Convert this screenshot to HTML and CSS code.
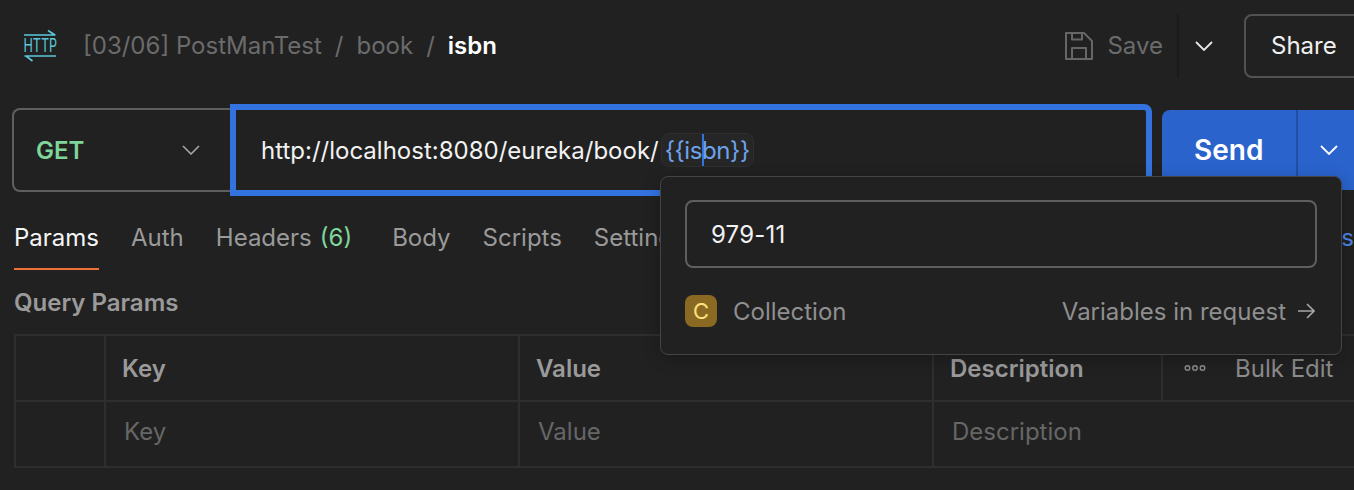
FILE: index.html
```html
<!DOCTYPE html>
<html lang="en">
<head>
<meta charset="utf-8">
<title>isbn</title>
<link rel="stylesheet" href="styles.css">
</head>
<body>
<div class="app">
  <header class="header">
    <svg class="http-icon" width="34" height="34" viewBox="0 0 34 34" fill="none" stroke="#5cc8dc" stroke-width="1.600">
      <path d="M1 6H32.500M25 1.500L32 6"/>
      <text class="http-text" transform="translate(.5 23) scale(.7 1)">HTTP</text>
      <path d="M1.500 27H33M3 27L9.500 32"/>
    </svg>
    <nav class="crumbs">
      <span>[03/06] PostManTest</span><span class="sep">/</span><span>book</span><span class="sep">/</span><b class="current">isbn</b>
    </nav>
    <div class="actions">
      <svg class="save-icon" width="28" height="28" viewBox="0 0 28 28" fill="none" stroke="#666" stroke-width="2" stroke-linejoin="round">
        <path d="M1 1H19L27 9V27H1Z"/>
        <path d="M7 1V7.500H17V1"/>
        <path d="M7 27V16H21V27"/>
      </svg>
      <span class="save-label">Save</span>
      <span class="divider"></span>
      <svg class="chev chev-save" width="18" height="10" viewBox="0 0 18 10" fill="none" stroke="#e8e8e8" stroke-width="1.800"><path d="M1 1L9 9L17 1"/></svg>
      <button class="share">Share</button>
    </div>
  </header>

  <section class="request">
    <div class="method">
      <span class="get">GET</span>
      <svg class="chev" width="18" height="10" viewBox="0 0 18 10" fill="none" stroke="#a6a6a6" stroke-width="1.600"><path d="M1 1L9 9L17 1"/></svg>
    </div>
    <div class="url">
      <span class="url-text">http://localhost:8080/eureka/book/</span>
      <span class="var">{{is<i class="caret"></i>bn}}</span>
    </div>
    <div class="send">
      <span class="send-label">Send</span>
      <span class="send-more">
        <svg class="chev" width="18" height="10" viewBox="0 0 18 10" fill="none" stroke="#fff" stroke-width="1.800"><path d="M1 1L9 9L17 1"/></svg>
      </span>
    </div>
  </section>

  <nav class="tabs">
    <span class="tab active">Params</span>
    <span class="tab">Auth</span>
    <span class="tab headers">Headers <em class="count">(6)</em></span>
    <span class="tab">Body</span>
    <span class="tab">Scripts</span>
    <span class="tab">Settings</span>
    <span class="cookies">Cookies</span>
  </nav>

  <h2 class="section-title">Query Params</h2>

  <div class="table">
    <div class="cell"></div>
    <div class="cell head">Key</div>
    <div class="cell head">Value</div>
    <div class="cell head">Description</div>
    <div class="cell tools">
      <svg width="22" height="8" viewBox="0 0 22 8" fill="none" stroke="#8c8c8c" stroke-width="1.400"><circle cx="3.500" cy="4" r="2.300"/><circle cx="11" cy="4" r="2.300"/><circle cx="18.500" cy="4" r="2.300"/></svg>
      <span>Bulk Edit</span>
    </div>
    <div class="cell"></div>
    <div class="cell ph">Key</div>
    <div class="cell ph">Value</div>
    <div class="cell ph">Description</div>
    <div class="cell blank"></div>
  </div>
</div>

<aside class="popup">
  <div class="popup-input">979-11</div>
  <div class="popup-foot">
    <span class="badge">C</span>
    <span class="scope">Collection</span>
    <span class="link">Variables in request</span>
    <svg class="arrow" width="18" height="16" viewBox="0 0 18 16" fill="none" stroke="#a6a6a6" stroke-width="1.600"><path d="M1 8H17M10 1L17 8L10 15"/></svg>
  </div>
</aside>
</body>
</html>
```
FILE: styles.css
```css
* { box-sizing: border-box; }
html, body { margin: 0; height: 100%; }
body {
  position: relative;
  width: 1354px;
  height: 490px;
  overflow: hidden;
  background: #212121;
  color: #fff;
  font-family: Inter, "Liberation Sans", sans-serif;
  font-size: 24px;
}
.app { display: flex; flex-direction: column; width: 1354px; }

.header { display: flex; align-items: center; height: 92px; padding-left: 23px; flex: none; }
.http-icon { flex: none; }
.http-text { font-family: Inter, sans-serif; font-size: 18px; fill: #5cc8dc; stroke: none; font-weight: 400; }
.crumbs { display: flex; align-items: center; margin-left: 26px; padding-bottom: 2px; color: #6b6b6b; white-space: nowrap; }
.sep { margin: 0 13px; }
.current { color: #fff; font-weight: 600; }
.actions { display: flex; align-items: center; margin-left: auto; height: 64px; flex: none; }
.save-icon { flex: none; }
.save-label { margin-left: 14px; padding-bottom: 2px; color: #6b6b6b; }
.divider { width: 2px; height: 64px; margin-left: 14px; background: #1a1a1a; }
.chev { display: block; flex: none; }
.chev-save { margin-left: 16px; }
.share {
  width: 124px; height: 64px; margin-left: 31px; margin-right: -14px; padding: 0 0 2px 25px;
  border: 2px solid #525252; border-radius: 8px; background: none; color: #f0f0f0;
  font: inherit; text-align: left;
}

.request { display: flex; align-items: center; height: 92px; margin-top: 12px; padding-left: 12px; flex: none; }
.method {
  display: flex; align-items: center; justify-content: space-between; flex: none;
  width: 220px; height: 84px; padding: 0 32px 0 22px;
  border: 2px solid #5f5f5f; border-right: 0; border-radius: 8px 0 0 8px;
}
.get { color: #7fd69a; font-weight: 600; }
.url {
  display: flex; align-items: center; flex: none; width: 922px; height: 92px; margin-left: -2px; padding-left: 25px;
  border: 6px solid #3373e0; border-radius: 0 8px 0 0; position: relative; white-space: nowrap;
}
.url-text { color: #f2f2f2; }
.var {
  display: inline-flex; align-items: center; height: 34px; margin-left: 2px; padding: 0 3px;
  background: #262626; border: 1px solid #2e2e2e; border-radius: 8px; color: #6ea2ec; letter-spacing: -.4px;
}
.caret { display: inline-block; width: 2px; height: 32px; background: #3373e0; margin: 0 -2px 0 0; }
.send {
  display: flex; align-items: stretch; height: 80px; margin-left: 10px; width: 200px; flex: none;
  background: #2a63cc; border-radius: 8px 0 0 8px; font-weight: 600;
}
.send-label { display: flex; align-items: center; width: 134px; padding-left: 32px; font-size: 28px; }
.send-more { display: flex; align-items: center; padding-left: 22px; border-left: 2px solid #1f4ea3; flex: 1; }

.tabs { display: flex; align-items: center; height: 74px; padding-left: 14px; gap: 32px; flex: none; position: relative; color: #9a9a9a; white-space: nowrap; }
.tab { display: flex; align-items: center; height: 74px; padding-top: 9px; gap: 8px; }
.tab.active { color: #f5f5f5; box-shadow: inset 0 -2px 0 #f0703a; }
.headers { margin-right: 8px; }
.count { color: #7fd69a; font-style: normal; }
.cookies { margin-left: auto; padding-top: 9px; color: #4b86e4; }

.section-title { margin: 0; height: 64px; padding: 17px 0 0 14px; font-size: 24px; line-height: 32px; font-weight: 600; color: #9a9a9a; flex: none; }

.table {
  display: grid; grid-template-columns: 90px 414px 414px 229px 207px;
  grid-template-rows: 66px 66px; margin-left: 14px; width: 1354px;
  border-top: 2px solid #2e2e2e;
}
.cell { display: flex; align-items: center; padding-left: 16px; border-left: 2px solid #2e2e2e; border-bottom: 2px solid #2e2e2e; }
.head { color: #9a9a9a; font-weight: 600; }
.ph { color: #666; padding-left: 18px; padding-bottom: 6px; }
.tools { gap: 29px; padding-left: 21px; color: #8c8c8c; }
.blank { border-left: 0; }

.popup {
  position: absolute; left: 660px; top: 176px; width: 682px; height: 179px;
  padding: 23px 24px 0; background: #212121; border: 1px solid #444; border-radius: 8px;
  box-shadow: 0 4px 16px rgba(0, 0, 0, .25);
}
.popup-input {
  display: flex; align-items: center; height: 68px; padding-left: 24px;
  border: 2px solid #5f5f5f; border-radius: 8px; color: #f2f2f2; letter-spacing: .2px;
}
.popup-foot { display: flex; align-items: center; height: 32px; margin-top: 27px; color: #8f8f8f; }
.badge {
  display: flex; align-items: center; justify-content: center; width: 32px; height: 32px;
  background: #8a6a22; border-radius: 8px; color: #ffe07a; font-size: 22px;
}
.scope { margin-left: 16px; }
.link { margin-left: auto; margin-right: 11px; }
.arrow { margin-right: 2px; }
```
